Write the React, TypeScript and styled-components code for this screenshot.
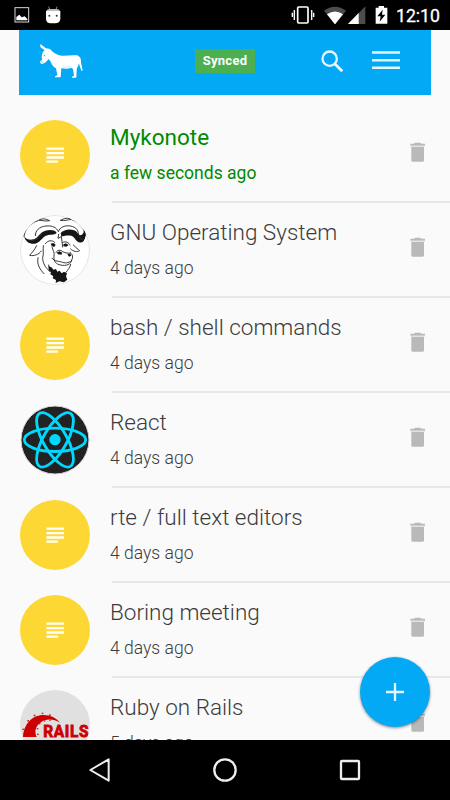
import React from 'react';
import styled, { createGlobalStyle, css } from 'styled-components';

const GlobalStyle = createGlobalStyle`
  * { box-sizing: border-box; }
  body { margin: 0; background: #fafafa; font-family: Roboto, "Liberation Sans", sans-serif; }
`;

const Screen = styled.div`
  position: relative;
  display: flex;
  flex-direction: column;
  width: 450px;
  height: 800px;
  overflow: hidden;
  background: #fafafa;
`;

const StatusBar = styled.div`
  display: flex;
  align-items: center;
  flex: none;
  height: 30px;
  padding: 0 10px 0 14px;
  background: #000;
  color: #fff;
`;

const StatusGroup = styled.div<{ $gap: number }>`
  display: flex;
  align-items: center;
  gap: ${(p) => p.$gap}px;
`;

const Spacer = styled.div`
  flex: 1;
`;

const Clock = styled.span`
  margin-left: 8px;
  padding-top: 2px;
  font-size: 17.7px;
  line-height: 28px;
  -webkit-text-stroke: 0.3px #fff;
`;

const Glyph = styled.svg<{ $w: number; $h: number }>`
  display: block;
  flex: none;
  width: ${(p) => p.$w}px;
  height: ${(p) => p.$h}px;
`;

const Toolbar = styled.header`
  display: grid;
  grid-template-columns: 1fr auto 1fr;
  align-items: start;
  flex: none;
  height: 65px;
  margin: 0 19px;
  padding: 0 31px 0 20px;
  background: #03a9f4;
`;

const Logo = styled.div`
  padding-top: 13px;
`;

const SyncBadge = styled.span`
  display: block;
  width: 60px;
  height: 24px;
  margin: 19px 0 0 11px;
  background: #4caf50;
  color: #fff;
  font-size: 13px;
  font-weight: 700;
  letter-spacing: 0.3px;
  line-height: 24px;
  text-align: center;
`;

const ToolbarActions = styled.div`
  display: flex;
  justify-content: flex-end;
  gap: 28px;
  padding-top: 20px;
`;

const NoteList = styled.ul`
  flex: 1;
  min-height: 0;
  margin: 0;
  padding: 12px 0 0 20px;
  overflow: hidden;
  list-style: none;
`;

const NoteRow = styled.li`
  display: flex;
  height: 95px;
`;

const Avatar = styled.div<{ $color: string }>`
  display: flex;
  align-items: center;
  justify-content: center;
  flex: none;
  width: 70px;
  height: 70px;
  margin-top: 13px;
  border-radius: 50%;
  overflow: hidden;
  background: ${(p) => p.$color};
`;

const NoteBody = styled.div`
  display: flex;
  justify-content: space-between;
  flex: 1;
  margin-left: 22px;
  padding-right: 24px;
  border-bottom: 2px solid #e8e8e8;
  height: 96px;
`;

const NoteText = styled.div<{ $active: boolean }>`
  margin-left: -2px;
  white-space: nowrap;
  color: #3c3c3c;
  font-weight: 300;
  ${(p) => p.$active && css`
    color: #008a00;
    font-weight: 400;
  `}
`;

const Title = styled.div`
  padding-top: 15px;
  font-size: 22.5px;
  line-height: 30px;
`;

const When = styled.div`
  padding-top: 9px;
  font-size: 17.55px;
  line-height: 25px;
`;

const DeleteButton = styled.button`
  align-self: flex-start;
  margin: 35px 0 0;
  padding: 0;
  border: 0;
  background: none;
`;

const AddButton = styled.button`
  position: absolute;
  left: 360px;
  top: 657.4px;
  display: flex;
  align-items: center;
  justify-content: center;
  width: 70px;
  height: 70px;
  padding: 0;
  border: 0;
  border-radius: 50%;
  background: #03a9f4;
  box-shadow: 0 1px 3px rgba(0, 0, 0, 0.45);
`;

const NavBar = styled.nav`
  display: flex;
  align-items: center;
  justify-content: center;
  gap: 101px;
  flex: none;
  height: 60px;
  background: #000;
`;

const PictureIcon = () => (
  <Glyph $w={16} $h={16} viewBox="44 21 48 48">
    <rect x="47" y="23" width="41" height="43" fill="none" stroke="#d8d8d8" strokeWidth="3" />
    <path d="M51 61V51L60 44L67 52L76 49L84 57V61Z" fill="#fff" />
  </Glyph>
);

const RobotIcon = () => (
  <Glyph $w={16} $h={18} viewBox="134 15 48 54">
    <path d="M145 17L148 25M170 17L167 25" stroke="#aaa" strokeWidth="2.5" />
    <path d="M138 30Q140 24 147 24H170Q177 24 179 30Z" fill="#bbb" />
    <path d="M137 30H180V54Q178 67 165 67H151Q138 67 137 54Z" fill="#fff" />
    <circle cx="147" cy="44" r="3" fill="#333" />
    <circle cx="169" cy="44" r="3" fill="#333" />
  </Glyph>
);

const VibrateIcon = () => (
  <Glyph $w={24} $h={20} viewBox="199 15 72 60">
    <path d="M203 38V51M209 30V60M261 30V60M267 38V51" stroke="#fff" strokeWidth="4.2" />
    <rect x="219" y="21" width="31" height="48" rx="3" fill="none" stroke="#fff" strokeWidth="5" />
  </Glyph>
);

const WifiIcon = () => (
  <Glyph $w={22} $h={18} viewBox="291 16 66 54">
    <path d="M291 30Q324 6 357 30L324 71Z" fill="#4d4d4d" />
    <path d="M300 41Q324 24 348 41L324 71Z" fill="#fff" />
  </Glyph>
);

const SignalIcon = () => (
  <Glyph $w={18} $h={18} viewBox="365 17 54 54">
    <path d="M365 71L417 18V71Z" fill="#4d4d4d" />
    <path d="M365 71L397 38V71Z" fill="#fff" />
  </Glyph>
);

const BatteryIcon = () => (
  <Glyph $w={13} $h={18} viewBox="447 18 39 54">
    <path d="M449 23H458V18H474V23H484V71H449Z" fill="#fff" />
    <path d="M470 29L454 49H464L461 65L478 44H468Z" fill="#000" />
  </Glyph>
);

const DonkeyIcon = () => (
  <Glyph $w={45} $h={37} viewBox="117 129 135 111">
    <path
      fill="#fff"
      d="M121 132L138 145C145 145 151 147 155 152C162 159 173 165 185 167C200 168 216 164 230 166C240 168 244 177 243 188L248 211L245 214L239 198L237 190C235 200 230 203 230 211L229 233H216V230L222 227L219 207L214 203C205 207 193 207 184 205L182 232H165V229L172 226L168 205C160 201 155 194 151 183L145 177C141 184 135 190 126 192L121 189L120 184L126 180L125 170L128 157L134 151L121 141Z"
    />
    <circle cx="133" cy="167" r="2" fill="#03a9f4" />
    <path d="M122 184L130 187" stroke="#03a9f4" strokeWidth="1.5" />
    <path d="M187 201Q201 203 213 199" fill="none" stroke="#8bd6fa" strokeWidth="1.5" />
  </Glyph>
);

const SearchIcon = () => (
  <Glyph $w={23} $h={23} viewBox="287 148 69 69">
    <circle cx="313" cy="174" r="21.5" fill="none" stroke="#e6f6fe" strokeWidth="6.8" />
    <path d="M328 189L351 212" stroke="#e6f6fe" strokeWidth="8.5" />
  </Glyph>
);

const MenuIcon = () => (
  <Glyph $w={28} $h={21} viewBox="442 150 84 63">
    <path d="M442 157.5H526M442 180.5H526M442 203.5H526" stroke="#e1f4fe" strokeWidth="7.5" />
  </Glyph>
);

const TextIcon = () => (
  <Glyph $w={18} $h={16} viewBox="108 110 54 48">
    <path d="M109 115H162M109 128.5H162M109 141.5H162M109 154H144" stroke="#fffef8" strokeWidth="7" />
  </Glyph>
);

const TrashIcon = () => (
  <Glyph $w={16} $h={20} viewBox="60 97 48 60">
    <path d="M61 102H72L75 99H91L94 102H105V108H61Z" fill="#b9b9b9" />
    <path d="M64 108H102V152Q102 156 98 156H68Q64 156 64 152Z" fill="#b9b9b9" />
    <path d="M62 110H104" stroke="#e2e2e2" strokeWidth="4" />
  </Glyph>
);

const GnuPicture = () => (
  <Glyph $w={70} $h={70} viewBox="0 0 210 210">
    <circle cx="105" cy="105" r="103.5" fill="#fff" stroke="#dcdcdc" strokeWidth="2.5" />
    <g fill="none" stroke="#2a2a2a" strokeWidth="2.8" strokeLinecap="round" strokeLinejoin="round">
      <path d="M88 17C78 10 64 10 56 16C70 16 78 20 88 17M54 17C30 24 14 42 12 64" />
      <path d="M122 16C132 9 146 8 154 13C142 14 134 19 122 16M156 14C180 22 193 40 196 62" />
      <path d="M46 62C46 46 58 35 78 33C98 31 110 38 115 50C119 38 133 30 151 33C169 36 177 47 175 62" />
      <path d="M50 92C44 104 36 113 29 121C42 124 56 119 64 108" />
      <path d="M160 90C168 98 174 103 179 107C172 112 160 110 152 102" />
      <path d="M70 92C68 106 72 116 68 128C68 144 76 158 88 168M54 128C50 146 58 162 72 176" />
      <path d="M76 86C84 76 96 74 104 82M128 82C138 78 146 82 150 90" />
      <path d="M96 96C99 106 104 112 102 124C100 138 108 148 122 150C138 154 154 148 155 134C160 128 158 118 152 114" />
      <path d="M108 112C112 104 122 104 128 110C136 114 146 116 152 114" />
      <path d="M96 130C104 140 118 138 128 142C138 146 150 142 156 136" />
      <path d="M124 64L128 96M116 58L114 70L122 66" />
      <path d="M152 148C150 158 144 164 138 172M86 150L90 170" />
    </g>
    <g fill="#151515">
      <path d="M12 62C17 73 33 79 47 70C58 62 60 52 76 47C92 42 108 46 110 54C103 62 87 57 76 63C64 71 58 84 45 86C29 88 15 79 12 62Z" />
      <path d="M122 54C131 45 147 41 162 46C176 51 174 65 186 59C193 54 193 45 191 37C200 51 198 68 191 78C180 88 170 80 163 69C155 57 138 62 124 64Z" />
      <path d="M92 86L100 84L107 89L103 96L95 93ZM129 89L137 85L146 90L139 95L131 94Z" />
      <path d="M110 113L118 109L127 113L124 119L114 118ZM142 118L151 116L154 122L147 125Z" />
      <path d="M86 153L96 158L100 164L108 162L112 170L119 167L125 175L132 170L141 175L138 184L142 194L132 202L118 199L107 204L108 195L98 190L100 184L91 177L93 171L86 165Z" />
    </g>
    <path d="M24 73Q44 84 66 55M178 65L188 76" fill="none" stroke="#777" strokeWidth="1.3" />
  </Glyph>
);

const ReactPicture = () => (
  <Glyph $w={70} $h={70} viewBox="30 30 210 210">
    <circle cx="135" cy="135" r="102" fill="#222" stroke="#d4d4d4" strokeWidth="3" />
    <g fill="none" stroke="#00d8ff" strokeWidth="8.5">
      <ellipse cx="135" cy="134.5" rx="92" ry="35" />
      <ellipse cx="135" cy="134.5" rx="92" ry="35" transform="rotate(60 135 134.5)" />
      <ellipse cx="135" cy="134.5" rx="92" ry="35" transform="rotate(120 135 134.5)" />
    </g>
    <circle cx="135" cy="134" r="17" fill="#00d8ff" />
  </Glyph>
);

const RailsPicture = () => (
  <Glyph $w={70} $h={70} viewBox="60 30 210 210">
    <path d="M69 171C71 132 97 105 130 105C152 105 169 114 180 128C160 115 136 115 121 128C106 140 103 153 110 171Z" fill="#c00" />
    <g fill="#d21d1d">
      <rect x="67" y="146" width="6" height="4" />
      <rect x="82" y="120" width="5" height="5" />
      <rect x="101" y="104" width="5" height="5" />
      <rect x="125" y="98" width="5" height="4" />
      <rect x="147" y="103" width="5" height="5" />
      <rect x="132" y="121" width="4" height="4" />
      <rect x="117" y="128" width="4" height="5" />
      <rect x="110" y="144" width="5" height="4" />
      <rect x="111" y="161" width="5" height="4" />
      <rect x="148" y="119" width="4" height="4" />
    </g>
    <text
      x="130"
      y="170"
      fill="#c00"
      stroke="#c00"
      strokeWidth="2.5"
      fontFamily="Roboto, sans-serif"
      fontWeight="700"
      fontSize="48"
      letterSpacing="2"
      textLength="137"
      lengthAdjust="spacingAndGlyphs"
    >
      RAILS
    </text>
  </Glyph>
);

const PlusIcon = () => (
  <Glyph $w={18} $h={18} viewBox="0 0 18 18">
    <path d="M9 0V18M0 9H18" stroke="#e6f6fe" strokeWidth="2.3" />
  </Glyph>
);

const BackIcon = () => (
  <Glyph $w={22} $h={26} viewBox="268 231 66 78">
    <path d="M272 270L327 238V302Z" fill="none" stroke="#eee" strokeWidth="6" strokeLinejoin="round" />
  </Glyph>
);

const HomeIcon = () => (
  <Glyph $w={26} $h={26} viewBox="0 0 26 26">
    <circle cx="13" cy="13" r="10.7" fill="none" stroke="#eee" strokeWidth="2.3" />
  </Glyph>
);

const RecentIcon = () => (
  <Glyph $w={22} $h={22} viewBox="0 0 22 22">
    <rect x="2" y="2" width="18" height="18" rx="0.8" fill="none" stroke="#eee" strokeWidth="2.3" />
  </Glyph>
);

type AvatarKind = 'text' | 'gnu' | 'react' | 'rails';

const avatars: Record<AvatarKind, { color: string; Picture: React.FC }> = {
  text: { color: '#fdd835', Picture: TextIcon },
  gnu: { color: 'transparent', Picture: GnuPicture },
  react: { color: 'transparent', Picture: ReactPicture },
  rails: { color: '#e0e0e0', Picture: RailsPicture },
};

const notes: { title: string; when: string; kind: AvatarKind; active?: boolean }[] = [
  { title: 'Mykonote', when: 'a few seconds ago', kind: 'text', active: true },
  { title: 'GNU Operating System', when: '4 days ago', kind: 'gnu' },
  { title: 'bash / shell commands', when: '4 days ago', kind: 'text' },
  { title: 'React', when: '4 days ago', kind: 'react' },
  { title: 'rte / full text editors', when: '4 days ago', kind: 'text' },
  { title: 'Boring meeting', when: '4 days ago', kind: 'text' },
  { title: 'Ruby on Rails', when: '5 days ago', kind: 'rails' },
];

export default function App() {
  return (
    <Screen>
      <GlobalStyle />
      <StatusBar>
        <StatusGroup $gap={15}>
          <PictureIcon />
          <RobotIcon />
        </StatusGroup>
        <Spacer />
        <StatusGroup $gap={9}>
          <VibrateIcon />
          <StatusGroup $gap={2}>
            <WifiIcon />
            <SignalIcon />
          </StatusGroup>
          <BatteryIcon />
        </StatusGroup>
        <Clock>12:10</Clock>
      </StatusBar>
      <Toolbar>
        <Logo>
          <DonkeyIcon />
        </Logo>
        <SyncBadge>Synced</SyncBadge>
        <ToolbarActions>
          <SearchIcon />
          <MenuIcon />
        </ToolbarActions>
      </Toolbar>
      <NoteList>
        {notes.map(({ title, when, kind, active }) => {
          const { color, Picture } = avatars[kind];
          return (
            <NoteRow key={title}>
              <Avatar $color={color}>
                <Picture />
              </Avatar>
              <NoteBody>
                <NoteText $active={!!active}>
                  <Title>{title}</Title>
                  <When>{when}</When>
                </NoteText>
                <DeleteButton aria-label="Delete note">
                  <TrashIcon />
                </DeleteButton>
              </NoteBody>
            </NoteRow>
          );
        })}
      </NoteList>
      <AddButton aria-label="Add note">
        <PlusIcon />
      </AddButton>
      <NavBar>
        <BackIcon />
        <HomeIcon />
        <RecentIcon />
      </NavBar>
    </Screen>
  );
}
